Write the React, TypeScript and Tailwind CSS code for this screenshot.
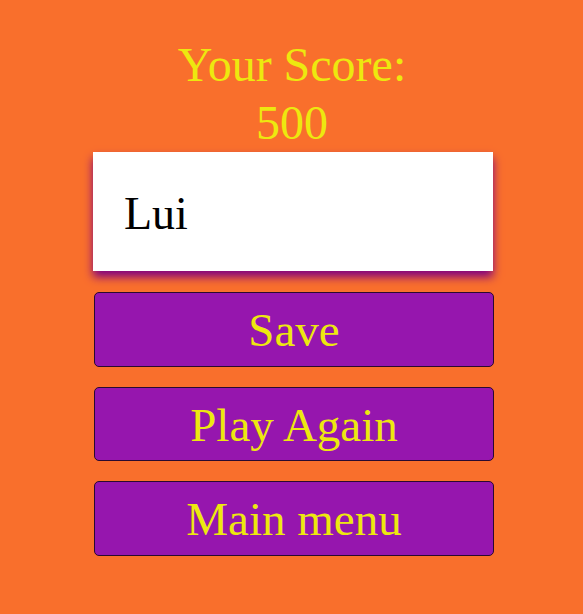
import React from "react";

export default function App() {
  const serif = { fontFamily: '"Liberation Serif", "DejaVu Serif", serif' };
  return (
    <div className="min-h-[614px] w-full bg-[#f96f2c] pt-[36px]" style={serif}>
      <h1 className="text-center text-[48px] leading-[58px] font-normal text-[#ede80f] ml-[1px]">
        <div>Your Score:</div>
        <div>500</div>
      </h1>
      <div className="ml-[93px] w-[400px] h-[119px] bg-white flex items-center pl-[31px] shadow-[0_6px_9px_rgba(128,0,128,1)]">
        <span className="text-[46px] leading-none text-black pt-[4px]">Lui</span>
      </div>
      <div className="ml-[94px] w-[400px] flex flex-col gap-[20px] mt-[21px]">
        {["Save", "Play Again", "Main menu"].map((t) => (
          <button
            key={t}
            className="h-[74.5px] w-full rounded-[5px] border border-[#2a0a30] bg-[#9616ae] text-[#ede80f] text-[47px] leading-none flex items-center justify-center pt-[3px]"
            style={serif}
          >
            {t}
          </button>
        ))}
      </div>
    </div>
  );
}
